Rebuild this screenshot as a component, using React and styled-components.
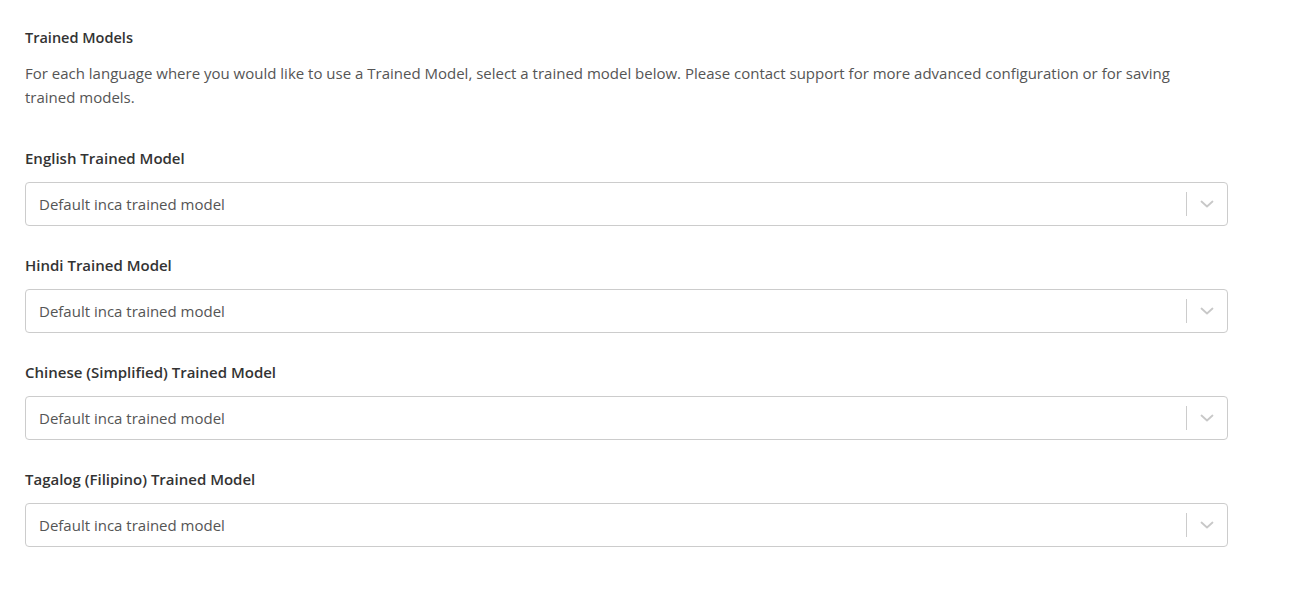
import React from "react";
import styled, { createGlobalStyle } from "styled-components";

const Global = createGlobalStyle`
  html, body { margin: 0; padding: 0; background: #ffffff; }
  body { font-family: "Open Sans", Lato, sans-serif; color: #333; }
  * { box-sizing: border-box; }
`;

const Page = styled.div`
  padding: 28px 25px 40px 25px;
  width: 1253px;
`;

const Title = styled.h2`
  margin: 0 0 13px 0;
  font-size: 14.5px;
  line-height: 20px;
  font-weight: 600;
  color: #333;
`;

const Description = styled.p`
  margin: 0 0 39px 0;
  font-size: 15px;
  line-height: 24px;
  color: #555;
  padding-right: 30px;
`;

const Field = styled.div`
  display: flex;
  flex-direction: column;
  gap: 14px;
  margin-bottom: 29px;
`;

const Label = styled.label`
  font-size: 15px;
  line-height: 20px;
  font-weight: 600;
  color: #333;
`;

const SelectBox = styled.div`
  display: flex;
  align-items: center;
  height: 44px;
  border: 1px solid #cccccc;
  border-radius: 4px;
  background: #fff;
  padding-left: 13px;
`;

const Value = styled.span`
  flex: 1;
  font-size: 15px;
  color: #555;
`;

const Indicators = styled.div`
  display: flex;
  align-items: center;
  height: 100%;
`;

const Separator = styled.span`
  width: 1px;
  height: 24px;
  background: #cccccc;
`;

const Chevron = styled.div`
  display: flex;
  align-items: center;
  justify-content: center;
  width: 40px;
  height: 100%;
  color: #c8c8c8;
`;

const languages = [
  "English",
  "Hindi",
  "Chinese (Simplified)",
  "Tagalog (Filipino)",
];

function ModelSelect({ language }) {
  return (
    <Field>
      <Label>{language} Trained Model</Label>
      <SelectBox>
        <Value>Default inca trained model</Value>
        <Indicators>
          <Separator />
          <Chevron>
            <svg width="14" height="8" viewBox="0 0 14 8" fill="none" stroke="currentColor" strokeWidth="1.8" strokeLinecap="round" strokeLinejoin="round">
              <polyline points="1.5,1.5 7,6.5 12.5,1.5" />
            </svg>
          </Chevron>
        </Indicators>
      </SelectBox>
    </Field>
  );
}

export default function App() {
  return (
    <>
      <Global />
      <Page>
        <Title>Trained Models</Title>
        <Description>
          For each language where you would like to use a Trained Model, select a trained model below. Please contact support for more advanced configuration or for saving trained models.
        </Description>
        {languages.map((l) => (
          <ModelSelect key={l} language={l} />
        ))}
      </Page>
    </>
  );
}
